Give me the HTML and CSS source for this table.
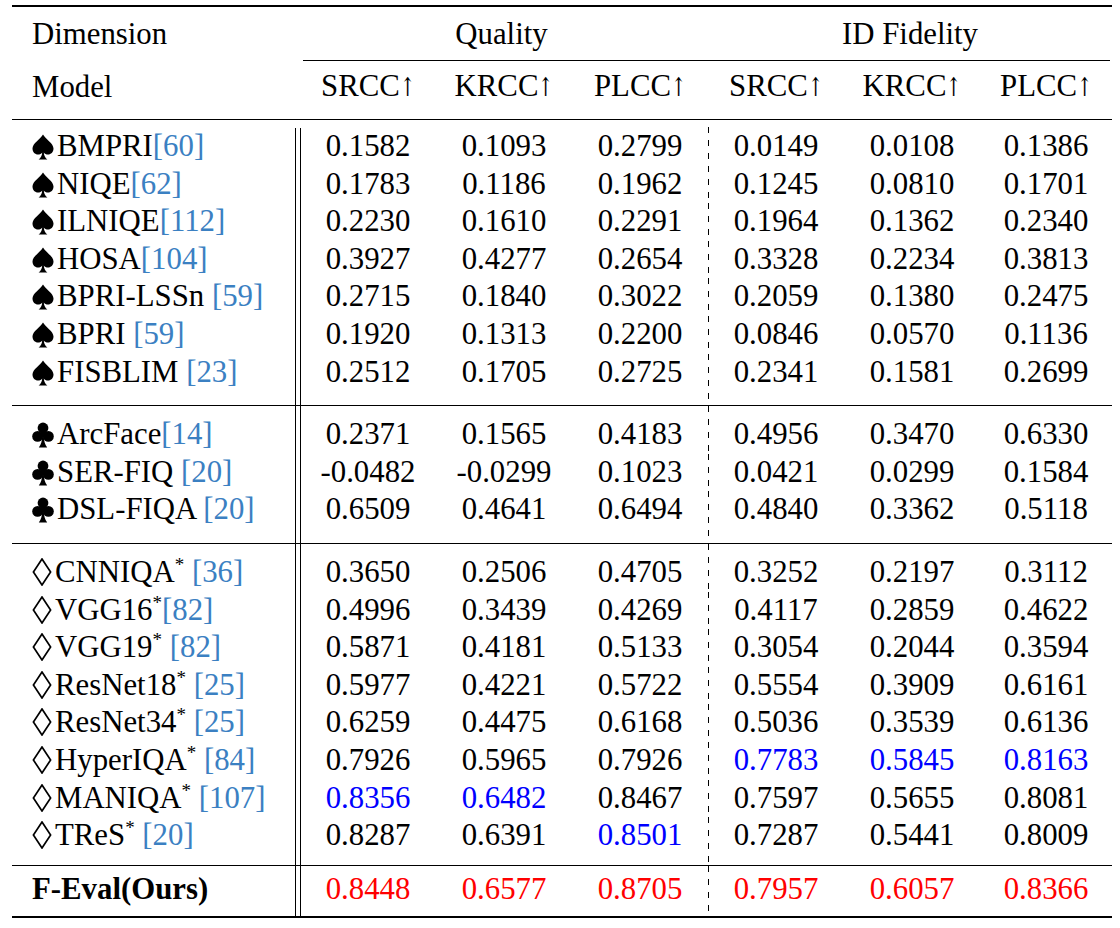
FILE: index.html
```html
<!DOCTYPE html>
<html>
<head>
<meta charset="utf-8">
<title>Results</title>
<link rel="stylesheet" href="styles.css">
</head>
<body>
<svg class="defs" width="0" height="0" aria-hidden="true">
  <defs>
    <symbol id="spade" viewBox="0 0 22 26">
      <path d="M11 0.5 C8.2 5.5 0.5 9.2 0.5 14.6 C0.5 18.3 3.1 20.6 6 20.6 C7.8 20.6 9.2 19.8 10.2 18.4 C10 21.4 8.8 23.8 6.6 25.6 L15.4 25.6 C13.2 23.8 12 21.4 11.8 18.4 C12.8 19.8 14.2 20.6 16 20.6 C18.9 20.6 21.5 18.3 21.5 14.6 C21.5 9.2 13.8 5.5 11 0.5 Z"/>
    </symbol>
    <symbol id="club" viewBox="0 0 22 26">
      <circle cx="11" cy="6" r="5.4"/>
      <circle cx="5.6" cy="14.4" r="5.4"/>
      <circle cx="16.4" cy="14.4" r="5.4"/>
      <path d="M8.5 9 L13.5 9 L13.5 15 L8.5 15 Z"/>
      <path d="M10.2 13 C10.2 18.5 9.2 22.5 6.8 25.6 L15.2 25.6 C12.8 22.5 11.8 18.5 11.8 13 Z"/>
    </symbol>
    <symbol id="diamond" viewBox="0 0 20 28">
      <path d="M10 1 L18.6 14 L10 27 L1.4 14 Z" fill="none" stroke="#000" stroke-width="1.7" stroke-linejoin="miter"/>
    </symbol>
  </defs>
</svg>
<table class="results">
  <colgroup>
    <col class="w-label"><col class="w-c2"><col class="w-c"><col class="w-c"><col class="w-c"><col class="w-c"><col class="w-c7">
  </colgroup>
  <thead>
    <tr class="hdr1">
      <th class="label">Dimension</th>
      <th colspan="3" class="group g-quality">Quality</th>
      <th colspan="3" class="group g-id">ID Fidelity</th>
    </tr>
    <tr class="hdr2">
      <th class="label">Model</th>
      <th class="c2">SRCC<span class="arr">↑</span></th>
      <th>KRCC<span class="arr">↑</span></th>
      <th>PLCC<span class="arr">↑</span></th>
      <th>SRCC<span class="arr">↑</span></th>
      <th>KRCC<span class="arr">↑</span></th>
      <th>PLCC<span class="arr">↑</span></th>
    </tr>
  </thead>
  <tbody class="s1">
    <tr><td class="label"><svg class="suit spade"><use href="#spade"/></svg>BMPRI<span class="cite">[60]</span></td><td class="c2">0.1582</td><td>0.1093</td><td>0.2799</td><td class="c5">0.0149</td><td>0.0108</td><td>0.1386</td></tr>
    <tr><td class="label"><svg class="suit spade"><use href="#spade"/></svg>NIQE<span class="cite">[62]</span></td><td class="c2">0.1783</td><td>0.1186</td><td>0.1962</td><td class="c5">0.1245</td><td>0.0810</td><td>0.1701</td></tr>
    <tr><td class="label"><svg class="suit spade"><use href="#spade"/></svg>ILNIQE<span class="cite">[112]</span></td><td class="c2">0.2230</td><td>0.1610</td><td>0.2291</td><td class="c5">0.1964</td><td>0.1362</td><td>0.2340</td></tr>
    <tr><td class="label"><svg class="suit spade"><use href="#spade"/></svg>HOSA<span class="cite">[104]</span></td><td class="c2">0.3927</td><td>0.4277</td><td>0.2654</td><td class="c5">0.3328</td><td>0.2234</td><td>0.3813</td></tr>
    <tr><td class="label"><svg class="suit spade"><use href="#spade"/></svg>BPRI-LSSn <span class="cite">[59]</span></td><td class="c2">0.2715</td><td>0.1840</td><td>0.3022</td><td class="c5">0.2059</td><td>0.1380</td><td>0.2475</td></tr>
    <tr><td class="label"><svg class="suit spade"><use href="#spade"/></svg>BPRI <span class="cite">[59]</span></td><td class="c2">0.1920</td><td>0.1313</td><td>0.2200</td><td class="c5">0.0846</td><td>0.0570</td><td>0.1136</td></tr>
    <tr><td class="label"><svg class="suit spade"><use href="#spade"/></svg>FISBLIM <span class="cite">[23]</span></td><td class="c2">0.2512</td><td>0.1705</td><td>0.2725</td><td class="c5">0.2341</td><td>0.1581</td><td>0.2699</td></tr>
  </tbody>
  <tbody class="s2">
    <tr><td class="label"><svg class="suit club"><use href="#club"/></svg>ArcFace<span class="cite">[14]</span></td><td class="c2">0.2371</td><td>0.1565</td><td>0.4183</td><td class="c5">0.4956</td><td>0.3470</td><td>0.6330</td></tr>
    <tr><td class="label"><svg class="suit club"><use href="#club"/></svg>SER-FIQ <span class="cite">[20]</span></td><td class="c2">-0.0482</td><td>-0.0299</td><td>0.1023</td><td class="c5">0.0421</td><td>0.0299</td><td>0.1584</td></tr>
    <tr><td class="label"><svg class="suit club"><use href="#club"/></svg>DSL-FIQA <span class="cite">[20]</span></td><td class="c2">0.6509</td><td>0.4641</td><td>0.6494</td><td class="c5">0.4840</td><td>0.3362</td><td>0.5118</td></tr>
  </tbody>
  <tbody class="s3">
    <tr><td class="label"><svg class="suit diamond"><use href="#diamond"/></svg>CNNIQA<sup>*</sup> <span class="cite">[36]</span></td><td class="c2">0.3650</td><td>0.2506</td><td>0.4705</td><td class="c5">0.3252</td><td>0.2197</td><td>0.3112</td></tr>
    <tr><td class="label"><svg class="suit diamond"><use href="#diamond"/></svg>VGG16<sup>*</sup><span class="cite">[82]</span></td><td class="c2">0.4996</td><td>0.3439</td><td>0.4269</td><td class="c5">0.4117</td><td>0.2859</td><td>0.4622</td></tr>
    <tr><td class="label"><svg class="suit diamond"><use href="#diamond"/></svg>VGG19<sup>*</sup> <span class="cite">[82]</span></td><td class="c2">0.5871</td><td>0.4181</td><td>0.5133</td><td class="c5">0.3054</td><td>0.2044</td><td>0.3594</td></tr>
    <tr><td class="label"><svg class="suit diamond"><use href="#diamond"/></svg>ResNet18<sup>*</sup> <span class="cite">[25]</span></td><td class="c2">0.5977</td><td>0.4221</td><td>0.5722</td><td class="c5">0.5554</td><td>0.3909</td><td>0.6161</td></tr>
    <tr><td class="label"><svg class="suit diamond"><use href="#diamond"/></svg>ResNet34<sup>*</sup> <span class="cite">[25]</span></td><td class="c2">0.6259</td><td>0.4475</td><td>0.6168</td><td class="c5">0.5036</td><td>0.3539</td><td>0.6136</td></tr>
    <tr><td class="label"><svg class="suit diamond"><use href="#diamond"/></svg>HyperIQA<sup>*</sup> <span class="cite">[84]</span></td><td class="c2">0.7926</td><td>0.5965</td><td>0.7926</td><td class="c5 second">0.7783</td><td class="second">0.5845</td><td class="second">0.8163</td></tr>
    <tr><td class="label"><svg class="suit diamond"><use href="#diamond"/></svg>MANIQA<sup>*</sup> <span class="cite">[107]</span></td><td class="c2 second">0.8356</td><td class="second">0.6482</td><td>0.8467</td><td class="c5">0.7597</td><td>0.5655</td><td>0.8081</td></tr>
    <tr><td class="label"><svg class="suit diamond"><use href="#diamond"/></svg>TReS<sup>*</sup> <span class="cite">[20]</span></td><td class="c2">0.8287</td><td>0.6391</td><td class="second">0.8501</td><td class="c5">0.7287</td><td>0.5441</td><td>0.8009</td></tr>
  </tbody>
  <tbody class="s4">
    <tr><td class="label ours">F-Eval(Ours)</td><td class="c2 best">0.8448</td><td class="best">0.6577</td><td class="best">0.8705</td><td class="c5 best">0.7957</td><td class="best">0.6057</td><td class="best">0.8366</td></tr>
  </tbody>
</table>
</body>
</html>
```
FILE: styles.css
```css
html, body {
  margin: 0;
  padding: 0;
  background: #ffffff;
}

body {
  font-family: "Liberation Serif", "Times New Roman", serif;
  color: #000000;
}

.defs {
  position: absolute;
  width: 0;
  height: 0;
  overflow: hidden;
}

.results {
  margin: 5px 0 0 12px;
  width: 1100px;
  table-layout: fixed;
  border-collapse: collapse;
  font-size: 30.8px;
}

.w-label { width: 283px; }
.w-c2 { width: 141px; }
.w-c { width: 136px; }
.w-c7 { width: 132px; }

.results th,
.results td {
  padding: 0;
  font-weight: normal;
  text-align: center;
  white-space: nowrap;
}

.results .label {
  text-align: left;
  padding-left: 20px;
}

.results thead {
  border-top: 2px solid #000;
  border-bottom: 1.5px solid #000;
}

.hdr1 th {
  line-height: 54px;
}

.hdr2 th {
  line-height: 50px;
  padding-bottom: 7px;
}

.group {
  background-image: linear-gradient(#000, #000);
  background-repeat: no-repeat;
  background-size: calc(100% - 8px) 1px;
  background-position: 8px 100%;
}

.g-id {
  background-size: calc(100% - 2px) 1px;
  background-position: 0 100%;
}

.arr {
  font-family: "DejaVu Serif", serif;
  font-size: 26px;
  display: inline-block;
  width: 15px;
  overflow: visible;
  transform: scaleX(0.7);
  transform-origin: left center;
}

.results td {
  line-height: 37.6px;
}

.results .c2 {
  padding-left: 5px;
}

.results tbody .c2 {
  background-image: linear-gradient(#000, #000), linear-gradient(#000, #000);
  background-repeat: no-repeat;
  background-size: 1px 100%, 1px 100%;
  background-position: 0 0, 5px 0;
}

.results tbody .c5 {
  background-image: repeating-linear-gradient(to bottom, #000 0 6px, transparent 6px 13px);
  background-repeat: no-repeat;
  background-size: 1px 100%;
  background-position: 0 0;
}

.s1 tr:first-child td {
  padding-top: 8px;
}

.results .s1 tr:first-child .c2 {
  background-size: 1px calc(100% - 8px), 1px calc(100% - 8px);
  background-position: 0 100%, 5px 100%;
}

.results .s1 tr:first-child .c5 {
  background-size: 1px calc(100% - 7px);
  background-position: 0 100%;
}

.s1 tr:last-child td,
.s2 tr:last-child td {
  padding-bottom: 14px;
}

.s2 tr:first-child td,
.s3 tr:first-child td {
  padding-top: 10px;
}

.s3 tr:last-child td {
  padding-bottom: 10px;
}

.s2, .s3, .s4 {
  border-top: 1.3px solid #000;
}

.s4 td {
  padding-top: 5px;
  padding-bottom: 8px;
}

.s4 {
  border-bottom: 2px solid #000;
}

.suit {
  display: inline-block;
  fill: #000;
  margin-right: 2px;
}

.spade {
  width: 22px;
  height: 26px;
  vertical-align: -4px;
  margin-right: 3px;
}

.club {
  width: 22px;
  height: 26px;
  vertical-align: -4px;
  margin-right: 3px;
}

.diamond {
  width: 20px;
  height: 28px;
  vertical-align: -4px;
  margin-right: 3px;
}

.cite {
  color: #3b80c2;
}

sup {
  font-size: 19px;
  line-height: 0;
  vertical-align: 11px;
}

.results .ours {
  font-weight: bold;
}

.second {
  color: #0000ff;
}

.best {
  color: #ff0000;
}
```
